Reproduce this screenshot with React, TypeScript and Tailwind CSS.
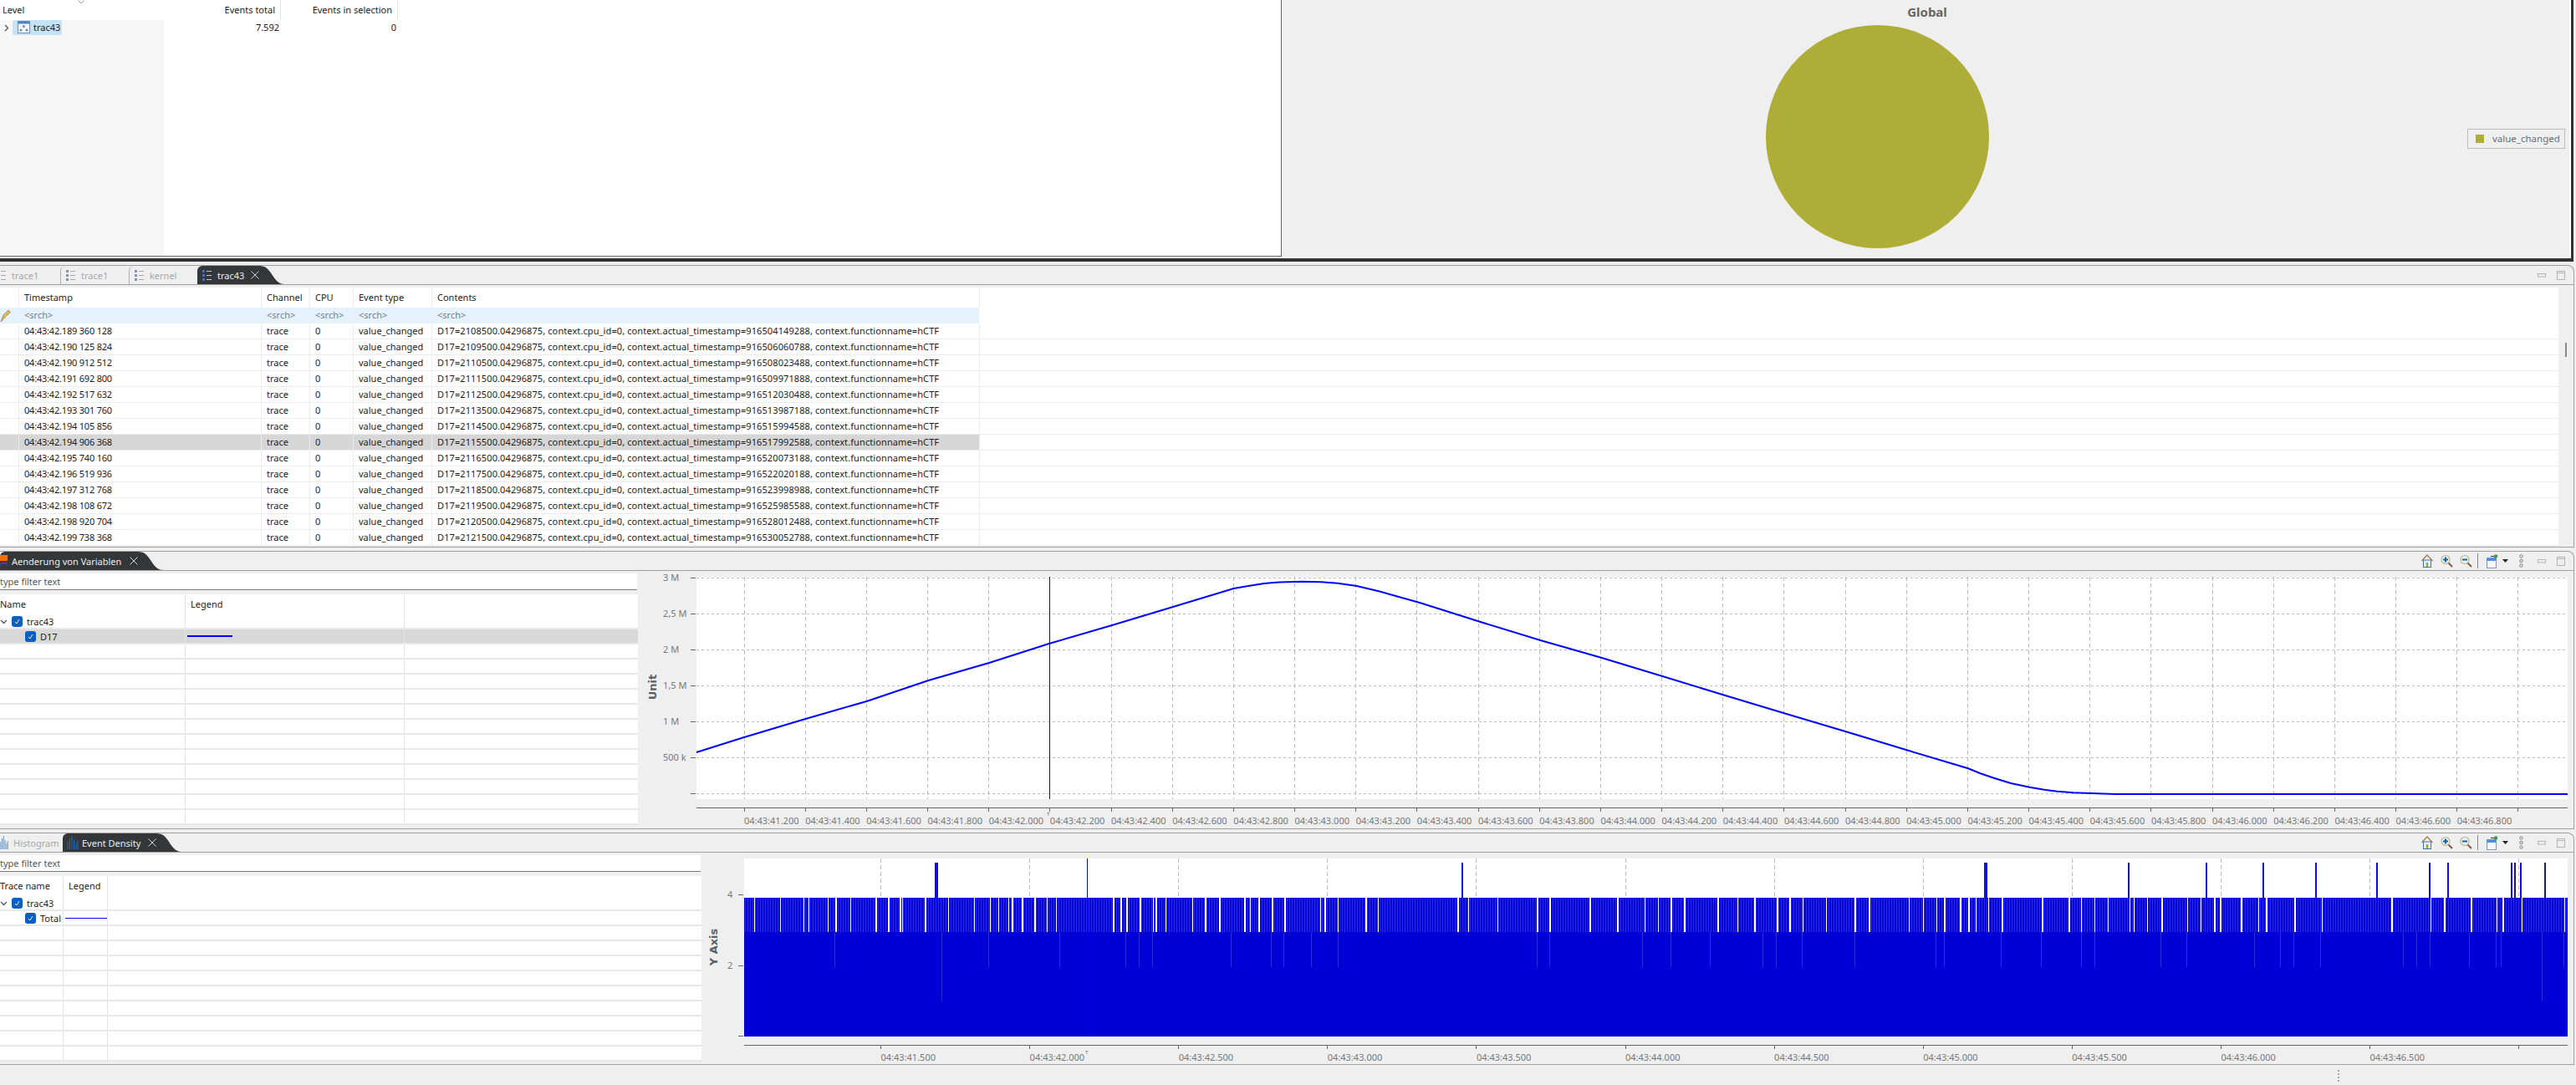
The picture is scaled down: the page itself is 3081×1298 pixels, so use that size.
import React from 'react';

const rows = [
  ['04:43:42.189 360 128', '2108500', '916504149288'],
  ['04:43:42.190 125 824', '2109500', '916506060788'],
  ['04:43:42.190 912 512', '2110500', '916508023488'],
  ['04:43:42.191 692 800', '2111500', '916509971888'],
  ['04:43:42.192 517 632', '2112500', '916512030488'],
  ['04:43:42.193 301 760', '2113500', '916513987188'],
  ['04:43:42.194 105 856', '2114500', '916515994588'],
  ['04:43:42.194 906 368', '2115500', '916517992588'],
  ['04:43:42.195 740 160', '2116500', '916520073188'],
  ['04:43:42.196 519 936', '2117500', '916522020188'],
  ['04:43:42.197 312 768', '2118500', '916523998988'],
  ['04:43:42.198 108 672', '2119500', '916525985588'],
  ['04:43:42.198 920 704', '2120500', '916528012488'],
  ['04:43:42.199 738 368', '2121500', '916530052788'],
];

const curve =
  '833,900 890,882 963.5,860 1036.5,839 1110.5,814 1183,793 1254.7,770 1330,748 1403,726 1475.6,704 1490,701.5 1512,698 1530,696.5 1549,696 1558,695.7 1580,696.3 1600,697.8 1622.6,701 1650,707.5 1680,716 1698,721 1768.3,743.3 1841.5,765.7 1915,786.7 1988.4,809 2061,831.3 2134,853.3 2207,875 2280.5,897.3 2354,919.3 2368,925 2384.6,930.7 2405,937 2427.4,941.7 2445,944.8 2460.5,946.7 2480,948.2 2500.6,949 2530,950 3071,950';

// measured from the bars, one list per stretch of the axis
const at = (offset: number, scale: number, list: number[]) => list.map((z) => offset + z / scale);

const bandGaps = [
  ...at(880, 1.96, [43, 103, 158, 170, 215, 234, 268, 328, 357, 385, 390, 443, 497, 558, 595, 615, 638, 647, 671, 700, 729, 750, 884, 902, 916, 947, 978, 984, 1007, 1070, 1100, 1133, 1192, 1205, 1225, 1257, 1286, 1370, 1380, 1411, 1476, 1505]),
  ...at(1680, 1.96, [124, 148, 217, 310, 340, 434, 498, 562, 593, 624, 655, 734, 780, 820, 873, 902, 932, 987, 1055, 1088, 1181, 1215, 1246, 1265, 1302, 1322, 1338, 1368, 1400, 1494, 1558]),
  ...at(2400, 2.3, [97, 171, 204, 241, 278, 338, 349, 386, 426, 496, 533, 571, 587, 645, 692, 714, 792, 866, 1058, 1165, 1203, 1277, 1347, 1364, 1416, 1534]),
];
const spikes = [
  ...at(880, 1.96, [466, 471]),
  ...at(1680, 1.96, [134, 1359, 1363]),
  ...at(2400, 2.3, [333, 548, 704, 849, 1017, 1162, 1213, 1388, 1395, 1413, 1480]),
];
const faint = [
  ...at(880, 1.96, [232, 593, 760, 914, 946, 977, 1161, 1255, 1285, 1349, 1412]),
  ...at(1680, 1.96, [311, 340, 558, 624, 716, 840, 871, 932, 1055, 1246, 1265, 1398, 1493]),
  ...at(2400, 2.3, [95, 206, 243, 425, 496, 683, 754, 791, 864, 1092, 1129, 1166, 1274, 1346, 1361, 1532]),
];
const deep = [880 + 483 / 1.96, 2400 + 1472 / 2.3];

const Chevron = ({ open }: { open?: boolean }) => (
  <svg width="9" height="9" viewBox="0 0 9 9" className="shrink-0">
    <path d={open ? 'M1 3 L4.5 6.5 L8 3' : 'M3 1 L6.5 4.5 L3 8'} fill="none" stroke="#555" strokeWidth="1.3" />
  </svg>
);

const Check = () => (
  <span className="flex h-[13px] w-[13px] shrink-0 items-center justify-center rounded-[3px] bg-[#0a5fc0]">
    <svg width="9" height="9" viewBox="0 0 9 9">
      <path d="M2 5 L3.8 7 L7 2" fill="none" stroke="#fff" strokeWidth="0.9" />
    </svg>
  </span>
);

const ListIcon = ({ dim }: { dim?: boolean }) => (
  <svg width="12" height="14" viewBox="0 0 12 14" className={dim ? 'shrink-0 opacity-70' : 'shrink-0'}>
    <rect x="0" y="1" width="3" height="3" fill="#4a6fb0" />
    <rect x="0" y="6" width="3" height="3" fill="#4a6fb0" />
    <rect x="0" y="11" width="3" height="3" fill="#4a6fb0" />
    <path d="M5 2.5 H11 M5 7.5 H11 M5 12.5 H11" stroke={dim ? '#8a8a8a' : '#c8ccd0'} strokeWidth="1" />
  </svg>
);

const BarsIcon = ({ dim }: { dim?: boolean }) => (
  <svg width={dim ? 10 : 14} height="16" viewBox="0 0 14 16" preserveAspectRatio="none" className="shrink-0">
    <path d="M1 16 V7 M3.5 16 V3 M6 16 V0 M8.5 16 V5 M11 16 V9 M13 16 V6" stroke={dim ? '#5d86b5' : '#1f6fc0'} strokeWidth="1" />
  </svg>
);

const VariableIcon = () => (
  <svg width="10" height="14" viewBox="0 0 10 14" className="shrink-0">
    <rect x="0" y="0" width="9" height="7" fill="#f07010" />
    <path d="M0 13 L5 8 L9 13" fill="none" stroke="#2040d0" strokeWidth="1.5" />
    <path d="M0 10 H9" stroke="#d02020" strokeWidth="1.2" />
  </svg>
);

const TraceIcon = () => (
  <svg width="15" height="15" viewBox="0 0 15 15" className="shrink-0">
    <rect x="0.5" y="0.5" width="14" height="14" fill="#f4f8fc" stroke="#6f8fb0" />
    <rect x="0.5" y="0.5" width="14" height="3" fill="#4f86c0" />
    <circle cx="7.5" cy="6.5" r="1.5" fill="#6d8db0" />
    <circle cx="4" cy="11" r="1.5" fill="#6d8db0" />
    <circle cx="11" cy="11" r="1.5" fill="#6d8db0" />
  </svg>
);

const Close = () => (
  <svg width="10" height="10" viewBox="0 0 10 10" className="ml-auto shrink-0">
    <path d="M0.5 0.5 L9.5 9.5 M9.5 0.5 L0.5 9.5" stroke="#e4e6e8" strokeWidth="0.9" />
  </svg>
);

const WindowButtons = () => (
  <div className="flex items-center gap-[13px]">
    <svg width="10" height="5" viewBox="0 0 10 5">
      <rect x="0.5" y="0.5" width="9" height="3.5" fill="none" stroke="#b5b5b5" />
    </svg>
    <svg width="10" height="11" viewBox="0 0 10 11">
      <rect x="0.5" y="0.5" width="9" height="10" fill="none" stroke="#b5b5b5" />
      <path d="M0.5 2.5 H9.5" stroke="#b5b5b5" />
    </svg>
  </div>
);

const Magnifier = ({ plus }: { plus?: boolean }) => (
  <svg width="15" height="16" viewBox="0 0 15 16">
    <path d="M9 10 L14 15" stroke="#7a5a48" strokeWidth="2" />
    <circle cx="6" cy="6.5" r="5" fill="#eaf2f8" stroke="#c2b48a" strokeWidth="1.2" />
    <path d={plus ? 'M3 6.5 H9 M6 3.5 V9.5' : 'M3 6.5 H9'} stroke="#0b63a8" strokeWidth="2" />
  </svg>
);

const ChartToolbar = () => (
  <div className="flex items-center">
    <svg width="14" height="16" viewBox="0 0 14 16">
      <path d="M0.5 8 L7 1 L13.5 8" fill="none" stroke="#a07a50" strokeWidth="1.2" />
      <rect x="2.5" y="7" width="9" height="8.5" fill="#e8f0f8" stroke="#3f74b0" />
      <rect x="5.8" y="10" width="2.4" height="5" fill="#8ab030" />
    </svg>
    <span className="ml-[9px]">
      <Magnifier plus />
    </span>
    <span className="ml-[8px]">
      <Magnifier />
    </span>
    <span className="ml-[6px] mr-[10px] h-[18px] w-px bg-[#888]" />
    <svg width="14" height="17" viewBox="0 0 14 17">
      <rect x="0.5" y="4.5" width="11" height="12" fill="#f4f8fc" stroke="#7a9ac0" />
      <rect x="0.5" y="4.5" width="11" height="3.5" fill="#4f90d8" />
      <path d="M5 2.5 H9" stroke="#333" />
      <circle cx="11" cy="2.5" r="2.2" fill="#30a040" />
    </svg>
    <svg width="7" height="4" viewBox="0 0 7 4" className="ml-[5px]">
      <path d="M0 0 H7 L3.5 4 Z" fill="#222" />
    </svg>
    <svg width="5" height="16" viewBox="0 0 5 16" className="ml-[13px]">
      <circle cx="2.5" cy="2.5" r="1.7" fill="none" stroke="#777" />
      <circle cx="2.5" cy="8" r="1.7" fill="none" stroke="#777" />
      <circle cx="2.5" cy="13.5" r="1.7" fill="none" stroke="#777" />
    </svg>
    <span className="ml-[17px]">
      <WindowButtons />
    </span>
  </div>
);

const InactiveTab = ({ className, icon, label }: { className: string; icon: React.ReactNode; label: string }) => (
  <div className={`flex h-full items-center gap-[6px] whitespace-nowrap ${className}`}>
    {icon}
    <span className="text-[#a8a8a8]">{label}</span>
  </div>
);

const ActiveTab = ({ icon, label, body }: { icon: React.ReactNode; label: string; body: string }) => (
  <div className="flex h-full items-stretch">
    <div className={`flex items-center rounded-tl-[6px] bg-[#33373a] whitespace-nowrap text-[#eceef0] ${body}`}>
      {icon}
      <span>{label}</span>
      <Close />
    </div>
    <svg width="30" height="22" viewBox="0 0 30 22" preserveAspectRatio="none">
      <path d="M0 0 C8 0 11 4 15 10 C20 18 24 22 30 22 L0 22 Z" fill="#33373a" />
    </svg>
  </div>
);

const TabBar = ({ children, right }: { children: React.ReactNode; right: React.ReactNode }) => (
  <div className="flex h-[23px] items-center justify-between border-b border-[#a0a0a0] pr-[10px]">
    <div className="flex h-full items-stretch">{children}</div>
    {right}
  </div>
);

const Panel = ({ className, children }: { className: string; children: React.ReactNode }) => (
  <section className={`flex flex-col overflow-hidden rounded-tr-[8px] border-t border-r border-b border-[#a0a0a0] ${className}`}>{children}</section>
);

const FilterBox = ({ width }: { width: string }) => (
  <div className={`mt-[3px] flex h-[20px] items-center border-b border-[#7a7a7a] bg-white text-[#555] ${width}`}>type filter text</div>
);

const TreeTable = ({
  cols,
  width,
  head,
  child,
  lineClass,
  rowCount,
  selected,
}: {
  cols: string;
  width: string;
  head: string[];
  child: string;
  lineClass: string;
  rowCount: number;
  selected?: boolean;
}) => (
  <div className={`mt-[5px] bg-white ${width}`}>
    <div className={`grid h-[24px] items-center ${cols}`}>
      <span className="flex h-full items-center pb-[2px]">{head[0]}</span>
      <span className="flex h-full items-center border-l border-[#e4e4e4] pb-[2px] pl-[6px]">{head[1]}</span>
      <span className="h-full border-l border-[#e4e4e4]" />
    </div>
    {Array.from({ length: rowCount }).map((_, i) => (
      <div key={i} className={`grid h-[18px] border-b-2 border-[#e8e8e8] ${cols} ${i === 1 && selected ? 'bg-[#d8d8d8]' : ''}`}>
        <span className="flex items-center">
          {i === 0 && (
            <span className="flex items-center gap-[5px]">
              <Chevron open />
              <Check />
              <span>trac43</span>
            </span>
          )}
          {i === 1 && (
            <span className="flex items-center gap-[5px] pl-[30px]">
              <Check />
              <span>{child}</span>
            </span>
          )}
        </span>
        <span className="flex items-center border-l border-[#e4e4e4] pl-[2px]">{i === 1 && <span className={lineClass} />}</span>
        <span className="border-l border-[#e4e4e4]" />
      </div>
    ))}
  </div>
);

const LineChart = () => {
  const vertical = Array.from({ length: 30 }, (_, i) => 890 + i * 73.17);
  const horizontal = [691, 734, 777, 820, 863, 906, 949];
  const yLabels = ['3 M', '2,5 M', '2 M', '1,5 M', '1 M', '500 k'];
  return (
    <svg width="2314" height="308" viewBox="764 683 2314 308" shapeRendering="crispEdges" className="shrink-0">
      <rect x="833" y="690" width="2238" height="266" fill="#fff" />
      {horizontal.map((y) => (
        <path key={y} d={`M833 ${y} H3071`} stroke="#bdbdbd" strokeDasharray="3 3" />
      ))}
      {vertical.map((x) => (
        <path key={x} d={`M${x} 690 V956`} stroke="#bdbdbd" strokeDasharray="5 3" />
      ))}
      {horizontal.map((y) => (
        <path key={y} d={`M826 ${y} H832`} stroke="#666" />
      ))}
      {yLabels.map((label, i) => (
        <text key={label} x="793" y={horizontal[i] + 4} fontSize="11" fill="#777">
          {label}
        </text>
      ))}
      <text x="785" y="822" transform="rotate(-90 785 822)" textAnchor="middle" fontSize="13" fontWeight="700" fill="#5a6068" fontFamily="DejaVu Sans">
        Unit
      </text>
      <polyline points={curve} fill="none" stroke="#0000ff" strokeWidth="2" shapeRendering="geometricPrecision" />
      <path d="M1255 690 V956" stroke="#0000f0" />
      <path d="M833 966 H3071" stroke="#666" />
      {vertical.map((x) => (
        <path key={x} d={`M${x} 966 V971`} stroke="#666" />
      ))}
      <text x="1252" y="976" fontSize="6" fill="#666">
        T
      </text>
      {vertical.slice(0, 29).map((x, i) => {
        const ms = 41200 + i * 200;
        const label = `04:43:${Math.floor(ms / 1000)}.${String(ms % 1000).padStart(3, '0')}`;
        return (
          <text key={label} x={x} y="986" fontSize="11" fill="#777">
            {label}
          </text>
        );
      })}
    </svg>
  );
};

const DensityChart = () => {
  const vertical = Array.from({ length: 12 }, (_, i) => 1053.5 + i * 178.1);
  return (
    <svg width="2239" height="255" viewBox="839 1019 2239 255" shapeRendering="crispEdges" className="shrink-0">
      <defs>
        <pattern id="band" width="3" height="10" patternUnits="userSpaceOnUse">
          <rect width="3" height="10" fill="#0606d8" />
          <rect width="1" height="10" fill="#2a2ae0" />
        </pattern>
      </defs>
      <rect x="890" y="1026" width="2181" height="213" fill="#fff" />
      {vertical.map((x) => (
        <path key={x} d={`M${x} 1026 V1073`} stroke="#bdbdbd" strokeDasharray="5 3" />
      ))}
      <rect x="890" y="1073" width="2181" height="41" fill="url(#band)" />
      {bandGaps.map((x) => (
        <rect key={x} x={x} y="1073" width="1.5" height="41" fill="#fff" />
      ))}
      <rect x="890" y="1114" width="2181" height="125" fill="#0000d6" />
      {faint.map((x) => (
        <path key={x} d={`M${x} 1114 V1156`} stroke="#2c2ce2" />
      ))}
      {deep.map((x) => (
        <path key={x} d={`M${x} 1114 V1197`} stroke="#2c2ce2" />
      ))}
      {spikes.map((x) => (
        <rect key={x} x={x} y="1031" width="2" height="42" fill="#0f0fd8" />
      ))}
      <path d="M1300 1026 V1239" stroke="#0000e8" />
      {[1069, 1154, 1238].map((y) => (
        <path key={y} d={`M883 ${y} H889`} stroke="#666" />
      ))}
      <text x="870" y="1073" fontSize="11" fill="#777">
        4
      </text>
      <text x="870" y="1158" fontSize="11" fill="#777">
        2
      </text>
      <text x="858" y="1132" transform="rotate(-90 858 1132)" textAnchor="middle" fontSize="13" fontWeight="700" fill="#5a6068" fontFamily="DejaVu Sans">
        Y Axis
      </text>
      <path d="M890 1249 H3071" stroke="#666" />
      {vertical.map((x) => (
        <path key={x} d={`M${x} 1249 V1254`} stroke="#666" />
      ))}
      <text x="1298" y="1260" fontSize="6" fill="#666">
        T
      </text>
      {vertical.slice(0, 11).map((x, i) => {
        const ms = 41500 + i * 500;
        const label = `04:43:${Math.floor(ms / 1000)}.${String(ms % 1000).padStart(3, '0')}`;
        return (
          <text key={label} x={x} y="1268" fontSize="11" fill="#777">
            {label}
          </text>
        );
      })}
    </svg>
  );
};

const cellBorder = 'border-l border-[#ececec] pb-[2px] pl-[6px] flex items-center overflow-hidden whitespace-nowrap';
const eventCols = 'grid-cols-[22px_290px_58px_52px_94px_655px_1fr]';

export default function App() {
  return (
    <div className="flex h-[1298px] w-[3081px] flex-col overflow-hidden bg-[#efefef] font-['Noto_Sans','Open_Sans',sans-serif] text-[11px] leading-none text-[#1c1c1c]">
      {/* statistics view */}
      <div className="h-[313px] w-[3078px] shrink-0 border-r-[3px] border-b-[4px] border-[#2f3336] bg-white pr-[2px] pb-[2px]">
        <div className="flex h-full">
          <div className="w-[1533px] shrink-0 border-r border-b border-[#666] bg-white">
            <div className="grid h-[24px] grid-cols-[196px_140px_140px] items-center">
              <div className="relative flex h-full items-center pb-[2px] pl-[3px]">
                Level
                <svg width="8" height="5" viewBox="0 0 8 5" className="absolute top-0 left-[93px]">
                  <path d="M0.5 0.5 L4 4 L7.5 0.5" fill="none" stroke="#999" />
                </svg>
              </div>
              <div className="flex h-full items-center justify-end border-r border-[#e4e4e4] pr-[6px] pb-[2px]">Events total</div>
              <div className="flex h-full items-center justify-end border-r border-[#e4e4e4] pr-[6px] pb-[2px]">Events in selection</div>
            </div>
            <div className="flex h-[282px]">
              <div className="w-[196px] bg-[#f7f7f7]">
                <div className="flex h-[18px] items-center gap-[3px] pl-[3px]">
                  <Chevron />
                  <span className="flex h-[18px] items-center gap-[4px] rounded-[2px] bg-[#c4e2f8] pr-[2px] pb-px pl-[6px]">
                    <TraceIcon />
                    <span>trac43</span>
                  </span>
                </div>
              </div>
              <div className="grid h-[18px] grid-cols-[138px_140px] items-center pb-px">
                <span className="text-right">7.592</span>
                <span className="text-right">0</span>
              </div>
            </div>
          </div>
          <div className="min-w-0 flex-1 bg-[#efefef]">
            <svg width="1540" height="307" viewBox="1533 0 1540 307">
              <text x="2305" y="20" textAnchor="middle" fontSize="15" fontWeight="700" fill="#666">
                Global
              </text>
              <circle cx="2245.5" cy="163.5" r="133.5" fill="#aead38" />
              <rect x="2951.5" y="154.5" width="116" height="23" fill="none" stroke="#bcbcbc" />
              <rect x="2961" y="161" width="10" height="10" fill="#aead38" />
              <text x="2981" y="170" fontSize="11.5" fill="#66707a">
                value_changed
              </text>
            </svg>
          </div>
        </div>
      </div>

      {/* events table */}
      <Panel className="mt-[4px] h-[338px] w-[3079px] shrink-0">
        <TabBar right={<WindowButtons />}>
          <InactiveTab className="-ml-[4px] w-[76px]" icon={<ListIcon dim />} label="trace1" />
          <InactiveTab className="w-[82px] rounded-tl-[6px] border-l border-[#b0b0b0] pl-[6px]" icon={<ListIcon dim />} label="trace1" />
          <InactiveTab className="w-[82px] rounded-tl-[6px] border-l border-[#b0b0b0] pl-[6px]" icon={<ListIcon dim />} label="kernel" />
          <ActiveTab icon={<ListIcon />} label="trac43" body="w-[74px] gap-[6px] pl-[6px]" />
        </TabBar>
        <div className="mt-[3px] flex flex-1">
          <div className="h-[309px] w-[3060px] shrink-0 bg-white">
            <div className={`grid h-[24px] ${eventCols}`}>
              <span />
              {['Timestamp', 'Channel', 'CPU', 'Event type', 'Contents'].map((h) => (
                <span key={h} className={cellBorder}>
                  {h}
                </span>
              ))}
              <span className="border-l border-[#ececec]" />
            </div>
            <div className={`grid h-[19px] ${eventCols}`}>
              <span className="flex items-center bg-[#e5f1fb]">
                <svg width="13" height="16" viewBox="0 0 13 16">
                  <path d="M1 15 L4 7 L10 1 L12.5 3.5 L6.5 9 Z" fill="#e2bc50" stroke="#8a8270" strokeWidth="0.8" />
                </svg>
              </span>
              {[0, 1, 2, 3, 4].map((i) => (
                <span key={i} className="flex items-center bg-[#e5f1fb] pb-[2px] pl-[7px] text-[#7d7d7d]">
                  {'<srch>'}
                </span>
              ))}
              <span />
            </div>
            {rows.map(([ts, d17, actual], i) => {
              const cell = `${cellBorder} ${i === 7 ? 'bg-[#d6d6d6]' : ''}`;
              return (
                <div key={ts} className={`grid h-[19px] border-b border-[#ececec] ${eventCols}`}>
                  <span className={i === 7 ? 'bg-[#d6d6d6]' : ''} />
                  <span className={`${cell} tracking-[-0.2px]`}>{ts}</span>
                  <span className={cell}>trace</span>
                  <span className={cell}>0</span>
                  <span className={cell}>value_changed</span>
                  <span className={`${cell} tracking-[0.1px]`}>
                    {`D17=${d17}.04296875, context.cpu_id=0, context.actual_timestamp=${actual}, context.functionname=hCTF`}
                  </span>
                  <span className="border-l border-[#ececec]" />
                </div>
              );
            })}
          </div>
          <div className="flex flex-1 justify-center pt-[66px]">
            <span className="h-[17px] w-[2px] bg-[#8a8a8a]" />
          </div>
        </div>
      </Panel>

      {/* variable chart */}
      <Panel className="mt-[4px] h-[333px] w-[3079px] shrink-0">
        <TabBar right={<ChartToolbar />}>
          <ActiveTab icon={<VariableIcon />} label="Aenderung von Variablen" body="w-[165px] gap-[4px]" />
        </TabBar>
        <div className="flex min-h-0 flex-1">
          <div className="w-[764px] shrink-0">
            <FilterBox width="w-[762px]" />
            <TreeTable
              cols="grid-cols-[221px_262px_1fr]"
              width="w-[763px]"
              head={['Name', 'Legend']}
              child="D17"
              lineClass="block h-[2px] w-[54px] bg-[#0000f0]"
              rowCount={14}
              selected
            />
          </div>
          <LineChart />
        </div>
      </Panel>

      {/* event density */}
      <Panel className="mt-[4px] h-[278px] w-[3079px] shrink-0">
        <TabBar right={<ChartToolbar />}>
          <InactiveTab className="w-[75px] gap-[4px]" icon={<BarsIcon dim />} label="Histogram" />
          <ActiveTab icon={<BarsIcon />} label="Event Density" body="w-[112px] gap-[4px] pl-[5px]" />
        </TabBar>
        <div className="flex min-h-0 flex-1">
          <div className="w-[839px] shrink-0">
            <FilterBox width="w-[838px]" />
            <TreeTable
              cols="grid-cols-[75px_53px_1fr]"
              width="w-[839px]"
              head={['Trace name', 'Legend']}
              child="Total"
              lineClass="block h-px w-[51px] bg-[#0000f0]"
              rowCount={11}
            />
          </div>
          <DensityChart />
        </div>
      </Panel>

      <div className="flex flex-1 justify-end pt-[6px] pr-[283px]">
        <span className="h-[14px] border-l-2 border-dotted border-[#b0a8a0]" />
      </div>
    </div>
  );
}
